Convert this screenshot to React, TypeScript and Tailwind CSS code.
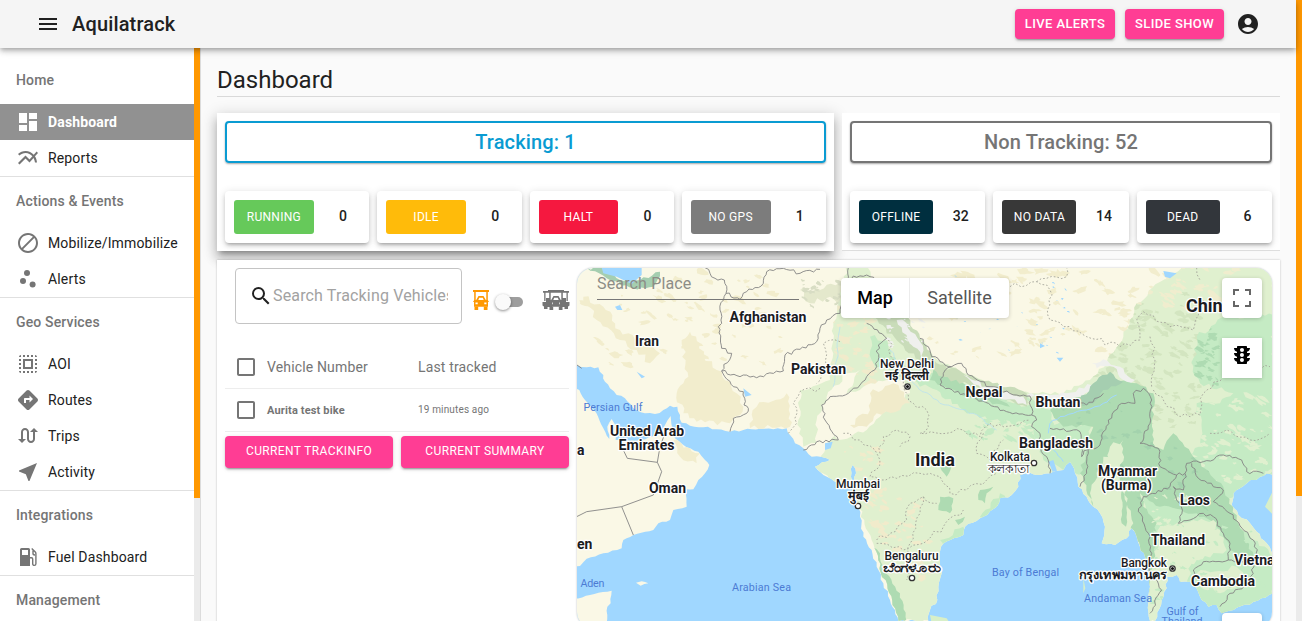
import React from "react";
import {
  MdMenu, MdDashboard, MdMultilineChart, MdScatterPlot, MdSelectAll, MdDirections,
  MdSwapCalls, MdNearMe, MdAccountCircle, MdSearch, MdTraffic, MdCheckBoxOutlineBlank,
} from "react-icons/md";

const DoNotDisturb = () => (
  <svg viewBox="0 0 24 24" className="size-6 fill-current">
    <path d="M12 2C6.5 2 2 6.5 2 12s4.5 10 10 10 10-4.5 10-10S17.5 2 12 2zM4 12c0-4.4 3.6-8 8-8 1.8 0 3.5.6 4.9 1.7L5.7 16.9C4.6 15.5 4 13.8 4 12zm8 8c-1.8 0-3.5-.6-4.9-1.7L18.3 7.1C19.4 8.5 20 10.2 20 12c0 4.4-3.6 8-8 8z" />
  </svg>
);

const Fuel = () => (
  <svg viewBox="0 0 24 24" className="size-6">
    <path fill="currentColor" fillRule="evenodd" d="M5.500 3h7a1.500 1.500 0 0 1 1.500 1.500V21H4V4.500A1.500 1.500 0 0 1 5.500 3zM6 5v5h6V5z" />
    <path d="M14 12.700h1.500a1.200 1.200 0 0 1 1.200 1.200v4.900a1.600 1.600 0 0 0 3.200 0V8.500c0-.8-.3-1.300-.8-1.800L15.700 3.600M17 5.500v3c0 .8.800 1.500 2 1.500" fill="none" stroke="currentColor" strokeWidth="1.400" />
  </svg>
);

const Cart = ({ wide = false }: { wide?: boolean }) => (
  <svg viewBox={wide ? "0 0 28 22" : "0 0 18 22"} className={wide ? "h-[22px] w-7 shrink-0 fill-[#757575]" : "h-[22px] w-[18px] shrink-0 fill-[#ff9800]"}>
    {wide && (
      <g>
        <path d="M1 2h26v1.700H1zM2.200 3h1.300v9H2.200zM24.500 3h1.300v9h-1.300z" />
        <path d="M4 9h4v3h2v6H2.500l-2-1.500V13H4zM24 9h-4v3h-2v6h7.500l2-1.500V13H24z" />
        <path d="M2 17h3.500v3H2zM22.500 17H26v3h-3.500z" />
      </g>
    )}
    <g transform={wide ? "translate(5 0)" : undefined}>
      <path d="M1 1h16v1.900H1zM2.200 2h1.500v10H2.200zM14.300 2h1.500v10h-1.500z" />
      <path fillRule="evenodd" d="M6.500 7h5l2.300 4h2l1.200 2h-1v4.800H2V13H1l1.200-2h2zM7.200 8.800L6.300 11h5.400l-.9-2.200zM3.500 13.500v1.700h2.200v-1.700zm8.800 0v1.700h2.200v-1.700z" />
      <path d="M2.500 17.500h3.700V21H2.500zM11.800 17.500h3.700V21h-3.700z" />
    </g>
  </svg>
);

type Item = { label: string; icon: React.ReactNode; active?: boolean };
const sections: { title: string; items: Item[] }[] = [
  { title: "Home", items: [
    { label: "Dashboard", icon: <MdDashboard size={24} />, active: true },
    { label: "Reports", icon: <MdMultilineChart size={24} /> }] },
  { title: "Actions & Events", items: [
    { label: "Mobilize/Immobilize", icon: <DoNotDisturb /> },
    { label: "Alerts", icon: <MdScatterPlot size={24} /> }] },
  { title: "Geo Services", items: [
    { label: "AOI", icon: <MdSelectAll size={24} /> },
    { label: "Routes", icon: <MdDirections size={24} /> },
    { label: "Trips", icon: <MdSwapCalls size={24} /> },
    { label: "Activity", icon: <MdNearMe size={24} /> }] },
  { title: "Integrations", items: [{ label: "Fuel Dashboard", icon: <Fuel /> }] },
  { title: "Management", items: [] },
];

function Sidebar() {
  return (
    <aside className="flex w-[201px] shrink-0 border-r border-[#dcdcdc] bg-white">
      <nav className="w-[194px] shrink-0 overflow-hidden pt-2">
        {sections.map((s) => (
          <section key={s.title} className="border-b border-[#e0e0e0]">
            <h2 className="h-12 px-4 text-sm leading-12 font-medium tracking-[0.15px] text-[#757575]">{s.title}</h2>
            {s.items.map((i) => (
              <div key={i.label} className={i.active ? "flex h-9 items-center gap-2 bg-[#919191] pl-4 text-sm font-bold tracking-[0.15px] text-white" : "flex h-9 items-center gap-2 pl-4 text-sm tracking-[0.15px] text-[#212121]"}>
                <span className={i.active ? "text-white" : "text-[#757575]"}>{i.icon}</span>
                {i.label}
              </div>
            ))}
          </section>
        ))}
      </nav>
      <div className="w-1.5 bg-[#ebebeb]"><div className="h-[450px] bg-[#ff9800]" /></div>
    </aside>
  );
}

const raised = "shadow-[0_3px_1px_-2px_rgba(0,0,0,0.2),0_2px_2px_0_rgba(0,0,0,0.14),0_1px_5px_0_rgba(0,0,0,0.12)]";

function Stat({ label, value, color }: { label: string; value: number; color: string }) {
  return (
    <div className="flex h-[52px] min-w-0 flex-1 items-center rounded bg-white p-[9px] shadow-[0_3px_3px_-2px_rgba(0,0,0,0.2),0_3px_4px_0_rgba(0,0,0,0.14),0_1px_8px_0_rgba(0,0,0,0.12)]">
      <span className={"flex h-[34px] w-[63.200%] items-center justify-center rounded-[3px] text-[12px] tracking-[0.3px] text-white " + color}>{label}</span>
      <span className="-mr-1 flex-1 pb-0.5 pl-2 text-center text-sm font-medium text-[#212121]">{value}</span>
    </div>
  );
}

const mainland = "M0 0H2110V645L2090 640 2070 650 2030 670 1990 700 1985 735 2005 765 2040 790 2060 815 2090 850 2110 890V1000L2050 1025 1990 1050 1955 1060 1940 1035 1915 1040 1895 1020 1880 985 1860 965 1830 965 1820 945 1790 950 1790 985 1775 1020 1755 1083H1740L1735 1030 1740 980 1735 930 1725 890 1710 860 1700 830 1685 805 1670 835 1635 855 1595 850 1605 800 1590 760 1570 740 1550 710 1525 680 1515 640 1500 605 1480 630 1440 640 1400 645 1380 638 1350 645 1345 680 1325 705 1290 715 1280 740 1230 775 1185 800 1180 825 1140 840 1113 860 1110 900 1115 940 1105 980 1102 1020 1080 1050 1075 1083H985L975 1050 960 1020 940 970 920 920 905 870 880 830 870 770 860 720 852 680 858 640 848 615 843 650 845 700 830 680 795 665 760 645 735 620 780 600 770 595 725 590 700 565 675 550 660 525 650 505 610 508 570 506 520 510 480 515 440 508 400 502 360 497 335 488 330 465 322 440 300 437 280 450 255 462 225 460 190 445 165 415 140 405 120 385 105 365 100 345 85 322 50 322 20 315 0 310Z";
const arabia = "M0 382L28 390 45 420 72 450 88 480 100 505 118 537 112 500 125 477 140 500 137 540 200 542 260 528 285 495 302 468 307 505 315 535 350 562 385 575 405 600 418 615 405 640 385 660 370 688 350 688 348 705 350 740 310 750 300 780 265 790 250 810 190 825 160 840 155 865 100 880 50 896 30 918H0Z";
const indiaGreen = "M835 0H890L900 60 960 140 1050 235 1090 290 1200 350 1330 395 1480 400 1560 360 1610 310 1660 230 1700 130 1780 60 1860 0H2110V1083H985L860 720 730 620 780 540 800 520 760 440 830 400 870 330 830 340 770 410 740 480 740 550 700 560 685 480 690 390 780 360 790 200Z";
const china = "M1880 230L1970 170 2110 165V645L2020 690 1960 720 1870 610 1810 600 1900 560 1880 430 1950 430 1990 400 1890 370 1870 320Z";
const burma = "M1440 450L1540 410 1600 350 1640 360 1700 370 1750 400 1748 550 1780 570 1810 520 1870 590 1960 680 2000 780 2050 890 2010 910 1940 800 1880 760 1770 740 1710 700 1720 740 1760 790 1740 1000 1710 860 1650 730 1640 600 1600 590 1560 700 1570 740 1530 640 1550 570 1570 500 1480 500Z";

const borders = [
  "M405 23L420 40 435 55 463 60 468 100 450 150 455 190 445 200 455 265 485 280 455 333 490 380 520 395 522 435 535 445 530 460 490 475 480 515",
  "M468 100L510 118 530 95 580 70 590 35 640 25 690 40 750 28",
  "M455 333L510 350 570 348 640 333 645 285 690 268 740 245 750 205 770 180 810 160 830 80 835 23",
  "M825 65L850 48 900 50 950 80M890 190L950 235 925 255 920 320 870 375 835 400 780 410 755 435 765 480 805 540 740 545 700 570",
  "M1050 235L1075 260 1085 290 1145 320 1175 310 1195 345 1260 380 1340 405 1380 408 1385 465 1310 455 1200 410 1110 375 1120 340 1145 320",
  "M1385 465L1400 480 1385 500 1410 520 1400 545 1430 590 1440 640M1445 435L1460 420 1550 435 1600 400M1440 505L1530 515 1535 590 1555 560 1550 640 1530 680",
  "M1555 570L1590 555 1615 480 1655 430 1695 430 1690 400 1720 385 1745 420 1740 490 1710 550 1765 565 1770 620 1820 645 1800 680 1720 710 1705 755 1735 820 1745 880 1740 940 1775 990 1740 1060",
  "M1820 645L1845 640 1850 610 1900 605 1960 585 2015 600 2030 635 2080 640M1865 610L1885 655 1960 690 1930 725 1980 760 2050 840 2065 900 2045 910",
  "M1845 640L1840 690 1810 680 1820 720 1840 730 1825 790 1860 780 1900 760 1930 770 1960 820 1980 850 1975 900 1900 905 1870 930 1870 970M1975 900L2050 910 2040 970 1980 1000 1950 1040",
];
const desertBorders = [
  "M0 780L50 755 155 740 190 825M155 740L250 705 275 635 262 607 172 595 150 550M262 607L270 560 285 520",
  "M0 300L35 325M0 320L20 330",
];
const dashed = [
  "M750 385L690 395 670 430 680 490 655 520M810 245L760 250 770 320 740 370",
  "M955 240L970 300 1000 380 1030 430 1070 450 1075 500 1050 520 1130 520 1180 510 1230 530 1260 490 1300 500 1380 480",
  "M820 520L870 540 915 570 930 600 900 650 980 655 1050 640 1110 650 1140 700 1190 690 1250 660 1280 640",
  "M920 840L960 820 1010 780 1020 730 1060 710 1100 730M920 850L1000 870 1060 850 1120 800 1180 750M1060 710L1050 760 1020 850 1010 960",
  "M930 580L940 530 980 510 1020 530 990 560M1240 520L1220 580 1260 600 1300 540",
  "M1320 80L1400 65 1440 90 1440 180 1550 230 1650 260 1710 240 1700 180 1720 155 1800 200 1870 210 1900 120M1740 230L1755 300 1745 380M1750 390L1830 470 1890 465 1900 400 1960 350 2040 330 2100 320M1920 520L1970 510 2040 540 2100 520M1400 65L1490 50 1490 23M1880 23L1890 60",
];

const random = (seed: number) => {
  let s = seed;
  return () => (s = (s * 16807) % 2147483647) / 2147483647;
};

/** Splits the straight runs of a path into short, slightly displaced steps. */
function rough(d: string, amp: number, step = 13) {
  const rnd = random(4211);
  const tokens = d.match(/[MLHVZ]|-?[\d.]+/g) ?? [];
  let out = "", cmd = "M", x = 0, y = 0, sx = 0, sy = 0;
  const lineTo = (nx: number, ny: number) => {
    const dx = nx - x, dy = ny - y, len = Math.hypot(dx, dy) || 1;
    const n = Math.max(1, Math.round(len / step));
    for (let i = 1; i < n; i++) {
      const o = (rnd() - 0.5) * 2 * amp;
      out += `L${(x + (dx * i) / n - (dy / len) * o).toFixed(1)} ${(y + (dy * i) / n + (dx / len) * o).toFixed(1)}`;
    }
    out += `L${nx} ${ny}`;
    x = nx;
    y = ny;
  };
  for (let i = 0; i < tokens.length; i++) {
    const t = tokens[i];
    if (t === "Z") { lineTo(sx, sy); out += "Z"; continue; }
    if (/[MLHV]/.test(t)) { cmd = t; continue; }
    const v = Number(t);
    if (cmd === "H") lineTo(v, y);
    else if (cmd === "V") lineTo(x, v);
    else {
      const w = Number(tokens[++i]);
      if (cmd === "M") { out += `M${v} ${w}`; x = sx = v; y = sy = w; cmd = "L"; }
      else lineTo(v, w);
    }
  }
  return out;
}

function scatter(seed: number, n: number, x0: number, y0: number, w: number, h: number, size: number) {
  const rnd = random(seed);
  let d = "";
  for (let i = 0; i < n; i++) {
    const cx = x0 + rnd() * w, cy = y0 + rnd() * h, r = size * (0.3 + rnd());
    const slant = rnd() - 0.3;
    for (let k = 0; k < 11; k++) {
      const a = (k / 11) * Math.PI * 2, q = r * (0.35 + rnd() * 0.75);
      const px = Math.cos(a) * q * 1.4;
      d += (k ? "L" : "M") + (cx + px).toFixed(0) + " " + (cy + Math.sin(a) * q * 0.7 + px * slant).toFixed(0);
    }
    d += "Z";
  }
  return d;
}

type Label = [string, number, number, number, string?];
const labels: Label[] = [
  ["Afghanistan", 768, 322, 77], ["Iran", 647, 346, 24], ["Pakistan", 818.500, 374, 55],
  ["United Arab", 647, 436, 74], ["Emirates", 646.500, 450, 56], ["Oman", 667.500, 493, 37],
  ["Nepal", 984, 397, 37], ["Bhutan", 1058, 407, 45], ["Bangladesh", 1056, 448, 74],
  ["Myanmar", 1127.500, 476, 59], ["(Burma)", 1126.500, 490, 51], ["Laos", 1195, 505, 30],
  ["Thailand", 1178, 545, 54], ["Cambodia", 1223, 586, 64],
];
const cities: Label[] = [
  ["New Delhi", 907, 368, 54], ["नई दिल्ली", 907, 380, 44, "bold"], ["Mumbai", 858, 488, 44], ["मुंबई", 858.500, 500, 21, "bold"],
  ["Kolkata", 1010, 461, 40], ["কলকাতা", 1008.500, 473, 41], ["Bengaluru", 911.500, 560, 54], ["ಬೆಂಗಳೂರು", 912, 572, 58, "bold"],
  ["Bangkok", 1144, 567, 46], ["กรุงเทพมหานคร", 1123, 579, 89, "bold"],
];
const seas: Label[] = [
  ["Persian Gulf", 613, 411, 59], ["Arabian Sea", 761.500, 591, 59], ["Bay of Bengal", 1025.500, 576, 67],
  ["Andaman Sea", 1118, 602, 68], ["Gulf of", 1182.500, 615, 32], ["Thailand", 1182, 624.500, 41], ["Aden", 592.500, 587, 24],
];

function WorldMap() {
  return (
    <svg viewBox="577 268 695 353" className="block h-[353px] w-[695px]">
      <defs>
        <clipPath id="land"><path d={rough(mainland, 4)} /><path d={rough(arabia, 2)} /></clipPath>
        <clipPath id="green"><path d={rough(indiaGreen, 6)} /></clipPath>
        <clipPath id="east"><path d={rough(china, 8)} /></clipPath>
        <clipPath id="hills"><path d={rough(burma, 6)} /></clipPath>
      </defs>
      <rect x="577" y="268" width="695" height="353" fill="#a0d7ff" />
      <g transform="translate(570 260) scale(.33333333)">
        <g clipPath="url(#land)">
          <rect width="2120" height="1090" fill="#faf8e6" />
          <path fill="#f2edcd" d={scatter(71, 70, 40, 30, 600, 300, 14)} />
          <path fill="#f2edcd" d={rough("M40 110L100 140 150 210 220 250 270 280 240 310 200 270 150 240 80 180ZM320 400L355 350 335 240 360 215 390 250 400 290 440 330 500 400 520 440 480 490 380 485 340 460ZM560 440L650 400 660 500 540 505ZM310 540L390 580 380 610 330 590Z", 9)} />
          <path fill="#f2edcd" d={scatter(97, 90, 1080, 30, 720, 270, 16)} />
          <path fill="#e4e8cc" d={rough("M690 90L750 90 830 60 860 90 820 140 780 110 720 130Z", 8)} />
          <path fill="#d8ddc4" d={scatter(23, 30, 700, 60, 160, 80, 9)} />
          <path fill="#e0f0cf" d={rough(indiaGreen, 6)} />
          <g clipPath="url(#green)">
            <path fill="#c5ebc4" d={scatter(37, 60, 1200, 410, 300, 130, 14)} />
            <path fill="#f1ebcb" d={scatter(19, 60, 780, 120, 140, 250, 12)} />
            <path fill="#f1ebcb" d={scatter(7, 40, 820, 540, 130, 260, 12)} />
            <path fill="#f1ebcb" d={scatter(11, 40, 930, 700, 150, 260, 12)} />
            <path fill="#d3e5c0" d={scatter(53, 150, 1560, 80, 330, 420, 14)} />
            <path fill="#f0edce" d={scatter(67, 40, 1700, 20, 300, 130, 14)} />
            <path fill="#c5ebc4" d={rough("M900 230L950 240 960 290 1010 320 1090 340 1200 400 1330 430 1440 450 1450 520 1370 490 1270 480 1180 450 1100 390 980 350 910 310ZM1110 840L1180 800 1180 830 1130 870ZM1230 770L1290 700 1310 720 1250 780Z", 8)} />
            <path fill="#aedbb2" d={rough("M1090 330L1180 370 1300 425 1320 440 1190 410 1080 360ZM1110 620L1145 615 1130 650ZM1110 710L1150 715 1140 760 1105 750ZM1230 690L1270 680 1250 700 1245 730 1225 720ZM1155 780L1185 770 1165 795Z", 5)} />
            <path fill="#aedbb2" d={rough("M905 860L930 880 940 930 990 1000 1010 1083H975L940 970Z", 4)} />
          </g>
          <path fill="#faf8e6" d={rough("M765 480L755 435 830 400 880 380 950 360 1000 360 1020 400 930 470 890 510 805 540Z", 6)} />
          <path fill="#f1ebcb" d={rough("M900 400L970 370 990 390 1020 430 990 450 920 460 890 500 840 495 900 450Z", 8)} />
          <path fill="#c5ebc4" d={rough(china, 8)} />
          <g clipPath="url(#east)">
            <path fill="#aedbb2" d={scatter(29, 35, 1880, 180, 80, 200, 11)} />
            <path fill="#e0f0cf" d={scatter(61, 70, 1850, 400, 260, 280, 13)} />
          </g>
          <path fill="#c5ebc4" d={rough("M1390 500L1560 490 1540 640 1480 630 1420 600ZM1720 700L1960 760 2110 890V1083H1850L1860 900 1740 890Z", 7)} />
          <path fill="#aedbb2" d={rough(burma, 6)} />
          <g clipPath="url(#hills)">
            <path fill="#a3d2ad" d={scatter(47, 60, 1440, 350, 500, 400, 11)} />
          </g>
          <path fill="#e0f0cf" d={rough("M1620 560L1660 540 1650 640 1670 730 1690 790 1660 830 1610 840 1630 740 1610 690ZM1770 800L1870 780 1930 780 1970 870 1880 900 1800 940 1750 900ZM1880 940L2000 920 2030 960 1950 1000 1890 980Z", 8)} />
          <path fill="#aedbb2" d={rough("M1655 690L1672 730 1668 800 1655 790Z", 3)} />
          <path fill="#c5ebc4" d={scatter(83, 55, 1750, 780, 340, 270, 9)} />
          <path fill="#e0f0cf" d={scatter(101, 30, 1750, 700, 110, 190, 8)} />
          <path fill="#c9dcb9" d={rough("M900 165L960 145 1010 160 1050 235 1100 310 1180 340 1370 400 1370 440 1270 400 1120 350 1050 300 990 250Z", 7)} />
          <path fill="#eff0ed" d={rough("M980 180L1010 190 1050 245 1060 300 1030 260ZM1180 345L1250 380 1360 410 1370 435 1260 400ZM1370 405L1490 400 1580 370 1580 385 1500 420ZM1565 310L1600 298 1650 320 1695 360 1670 365 1630 320 1580 325Z", 7)} />
          <path fill="#eff0ed" d={scatter(41, 36, 950, 110, 110, 150, 7)} />
          <path fill="#a5ceb0" d={rough("M1530 420L1570 370 1620 335 1660 365 1600 390 1570 430 1530 440ZM50 23H100L150 60 210 60 270 35 250 80 190 85 110 55Z", 6)} />
          <path fill="#a0d7ff" d="M95 23H215L215 45 185 72 140 50 100 40ZM135 140L150 135 157 150 142 150ZM200 335L225 350 215 355ZM520 385L545 405 525 410ZM765 550L788 545 782 565 765 570ZM1780 33L1820 40 1800 55 1785 50ZM1460 293L1480 293 1470 305ZM1410 250L1425 258 1410 265ZM1435 605L1450 600 1465 645 1450 640Z" />
          <path fill="#a0d7ff" d={scatter(17, 30, 1150, 40, 350, 240, 3.5)} />
          <path fill="none" stroke="#a0d7ff" strokeWidth="3" d={rough("M1440 490L1470 470 1550 450 1600 430 1640 405M1440 490L1435 520M1450 570L1480 605", 3)} />
          <path fill="none" stroke="#b4dff5" strokeWidth="2" d={rough("M960 270L1030 370 1110 430 1210 460 1280 510M790 380L800 300 810 200", 4)} />
        </g>
        <path fill="#faf8e6" d={rough("M0 1020L60 1005 125 992 122 1030 112 1040 110 1090H0ZM198 968L215 964 235 970 212 977Z", 2)} />
        <path fill="#d8efc8" d="M2085 740L2095 720 2110 690V765ZM1540 955L1546 985 1540 1000ZM1080 1065L1130 1075 1140 1090H1085Z" />
        <g fill="none" stroke="#858585" strokeWidth="2.700" strokeLinejoin="round">
          {borders.map((d) => <path key={d} d={rough(d, 5, 10)} />)}
          {desertBorders.map((d) => <path key={d} d={d} />)}
        </g>
        <g fill="none" stroke="#a5a59b" strokeWidth="2.700" strokeDasharray="5 6">{dashed.map((d) => <path key={d} d={rough(d, 8, 16)} />)}</g>
      </g>
      <g fill="white" stroke="#333" strokeWidth="1.300">
        {[[907.500, 386.500], [858, 506], [1034, 463], [912, 578], [1172.500, 568.500]].map(([x, y]) => <circle key={x} cx={x} cy={y} r="2.700" />)}
      </g>
      <circle cx="907.500" cy="386.500" r="1.500" fill="#111" /><circle cx="1172.500" cy="568.500" r="1.500" fill="#111" />
      <g textAnchor="middle" stroke="white" strokeWidth="2.500" strokeLinejoin="round" paintOrder="stroke" fill="#1b1b1f" className="font-[Roboto,'Noto_Sans',sans-serif]">
        {labels.map(([t, x, y, w]) => <text key={t} x={x} y={y} textLength={w} lengthAdjust="spacingAndGlyphs" fontSize="14.300" fontWeight="700">{t}</text>)}
        <text x="935" y="465.500" textLength="40" lengthAdjust="spacingAndGlyphs" fontSize="18.500" fontWeight="700">India</text>
        <text x="1186" y="312" textAnchor="start" fontSize="18" fontWeight="700">China</text>
        <text x="1234" y="565" textAnchor="start" fontSize="14" fontWeight="700">Vietnam</text>
        <text x="577" y="455" textAnchor="start" fontSize="14" fontWeight="700">a</text>
        <text x="577" y="549" textAnchor="start" fontSize="14" fontWeight="700">en</text>
        {cities.map(([t, x, y, w, b]) => <text key={t} x={x} y={y} textLength={w} lengthAdjust="spacingAndGlyphs" fontSize="12.300" fontWeight={b ? 700 : 500}>{t}</text>)}
      </g>
      <g textAnchor="middle" fill="#4c7bd4" className="font-[Roboto,sans-serif]">
        {seas.map(([t, x, y, w]) => <text key={t + y} x={x} y={y} textLength={w} fontSize="10.700">{t}</text>)}
      </g>
    </svg>
  );
}

function MapPanel() {
  return (
    <div className="relative h-[360px] w-[695px] shrink-0 overflow-hidden rounded-[16px] shadow-[0_0_2px_rgba(0,0,0,0.3)]">
      <WorldMap />
      <div className="absolute top-0 left-5 h-8 w-[202px] border-b border-[#777] text-base leading-[31px] tracking-[0.15px] text-[#8d8d86]">Search Place</div>
      <div className="absolute top-[10px] left-[264px] flex h-10 rounded-sm bg-white text-lg shadow-[0_1px_4px_rgba(0,0,0,0.2)]">
        <div className="w-[69px] border-r border-[#ececec] text-center leading-10 font-medium text-black">Map</div>
        <div className="w-[99px] text-center leading-10 text-[#565656]">Satellite</div>
      </div>
      <div className="absolute top-[10px] right-[10px] flex size-10 items-center justify-center rounded-sm bg-white shadow-[0_1px_4px_rgba(0,0,0,0.2)]">
        <svg viewBox="0 0 18 18" className="size-[18px] fill-[#666]"><path d="M0 0h6v2H2v4H0zM12 0h6v6h-2V2h-4zM0 12h2v4h4v2H0zM16 12h2v6h-6v-2h4z" /></svg>
      </div>
      <div className="absolute top-[70px] right-[10px] flex size-10 justify-center bg-white pt-[5px] text-black shadow-[0_1px_4px_rgba(0,0,0,0.2)]"><MdTraffic size={24} /></div>
      <div className="absolute top-[345px] right-[10px] size-10 rounded-sm bg-white shadow-[0_1px_4px_rgba(0,0,0,0.2)]" />
    </div>
  );
}

export default function App() {
  return (
    <div className="flex h-[621px] w-[1302px] overflow-hidden bg-[#fafafa] font-[Roboto,sans-serif] text-[#212121]">
      <div className="flex w-[1296px] flex-col">
        <header className="z-10 flex h-12 shrink-0 items-center bg-[#f5f5f5] pr-9 pl-9 shadow-[0_2px_4px_-1px_rgba(0,0,0,0.2),0_4px_5px_0_rgba(0,0,0,0.14),0_1px_10px_0_rgba(0,0,0,0.12)]">
          <MdMenu size={24} />
          <h1 className="ml-3 text-xl font-medium tracking-[0.15px]">Aquilatrack</h1>
          <div className={"ml-auto flex h-[30px] w-[100px] items-center justify-center rounded bg-[#ff3d94] text-[13px] font-medium tracking-[0.38px] text-white " + raised}>LIVE ALERTS</div>
          <div className={"mr-3 ml-2.5 flex h-[30px] w-[99px] items-center justify-center rounded bg-[#ff3d94] text-[13px] font-medium tracking-[0.38px] text-white " + raised}>SLIDE SHOW</div>
          <MdAccountCircle size={24} />
        </header>
        <div className="flex min-h-0 flex-1">
          <Sidebar />
          <main className="flex w-[1095px] flex-col overflow-hidden px-4 pt-4">
            <h2 className="h-[33px] shrink-0 border-b border-[#d9d9d9] text-2xl leading-8">Dashboard</h2>
            <div className="mt-4 flex h-[138px] shrink-0 gap-2">
              <section className="w-[617px] bg-white p-2 shadow-[0_5px_5px_-3px_rgba(0,0,0,0.3),0_8px_10px_1px_rgba(0,0,0,0.16),0_3px_14px_2px_rgba(0,0,0,0.14)]">
                <div className="h-[42px] rounded border-2 border-[#0a9bd2] text-center text-xl leading-[38px] font-medium tracking-[0.15px] text-[#0a9bd2] shadow-[0_1px_2px_rgba(0,0,0,0.35)]">Tracking: 1</div>
                <div className="mt-7 flex gap-2">
                  <Stat label="RUNNING" value={0} color="bg-[#66c95a]" />
                  <Stat label="IDLE" value={0} color="bg-[#ffbb0a]" />
                  <Stat label="HALT" value={0} color="bg-[#f5183f]" />
                  <Stat label="NO GPS" value={1} color="bg-[#7c7c7c]" />
                </div>
              </section>
              <section className="w-[438px] border-b border-[#dedede] bg-white p-2">
                <div className="h-[42px] rounded border-2 border-[#757575] text-center text-xl leading-[38px] font-medium tracking-[0.15px] text-[#757575] shadow-[0_1px_2px_rgba(0,0,0,0.35)]">Non Tracking: 52</div>
                <div className="mt-7 flex gap-2">
                  <Stat label="OFFLINE" value={32} color="bg-[#002f3f]" />
                  <Stat label="NO DATA" value={14} color="bg-[#383838]" />
                  <Stat label="DEAD" value={6} color="bg-[#32363b]" />
                </div>
              </section>
            </div>
            <section className="relative mt-[9px] flex h-[400px] shrink-0 bg-white p-2 shadow-[0_0_2px_rgba(0,0,0,0.25)]">
              <div className="w-[344px] shrink-0">
                <div className="flex h-14">
                  <div className="ml-[10px] flex w-[227px] shrink-0 items-center rounded border border-[#c4c4c4] pl-[13px]">
                    <MdSearch size={24} />
                    <div className="w-[175px] overflow-hidden text-base tracking-[0.15px] whitespace-nowrap text-[#a2a2a2]">Search Tracking Vehicles</div>
                  </div>
                  <div className="ml-[10px] flex shrink-0 items-center pt-2">
                    <Cart />
                    <div className="ml-[5px] flex h-4 w-[30px] items-center pt-1"><div className="z-10 size-4 shrink-0 rounded-full bg-[#fafafa] shadow-[0_1px_3px_rgba(0,0,0,0.45)]" /><div className="-ml-2 h-[10px] w-5 rounded-full bg-[#9e9e9e]" /></div>
                    <div className="ml-[17px]"><Cart wide /></div>
                  </div>
                </div>
                <div className="mt-[21px] flex h-11 items-center border-b border-[#ededed] pl-[9px] text-sm tracking-[0.15px] text-[#757575]">
                  <MdCheckBoxOutlineBlank size={24} /><span className="ml-[9px] w-[151px]">Vehicle Number</span><span>Last tracked</span>
                </div>
                <div className="flex h-[43px] items-center border-b border-[#ededed] pl-[9px] text-[11px] text-[#757575]">
                  <MdCheckBoxOutlineBlank size={24} /><span className="ml-[9px] w-[151px] pt-[3px] font-bold tracking-[0.15px]">Aurita test bike</span><span className="pb-0.5 text-[10px] tracking-[0.15px]">19 minutes ago</span>
                </div>
                <div className="mt-1 flex gap-2 text-[12px] tracking-[0.38px] text-white">
                  <div className={"h-8 w-[168px] rounded bg-[#ff3d94] text-center leading-[30px] " + raised}>CURRENT TRACKINFO</div>
                  <div className={"h-8 w-[168px] rounded bg-[#ff3d94] text-center leading-[30px] " + raised}>CURRENT SUMMARY</div>
                </div>
              </div>
              <div className="ml-2"><MapPanel /></div>
            </section>
          </main>
        </div>
      </div>
      <div className="w-1.5 bg-[#ebebeb]"><div className="h-[496px] bg-[#ff9800]" /></div>
    </div>
  );
}
